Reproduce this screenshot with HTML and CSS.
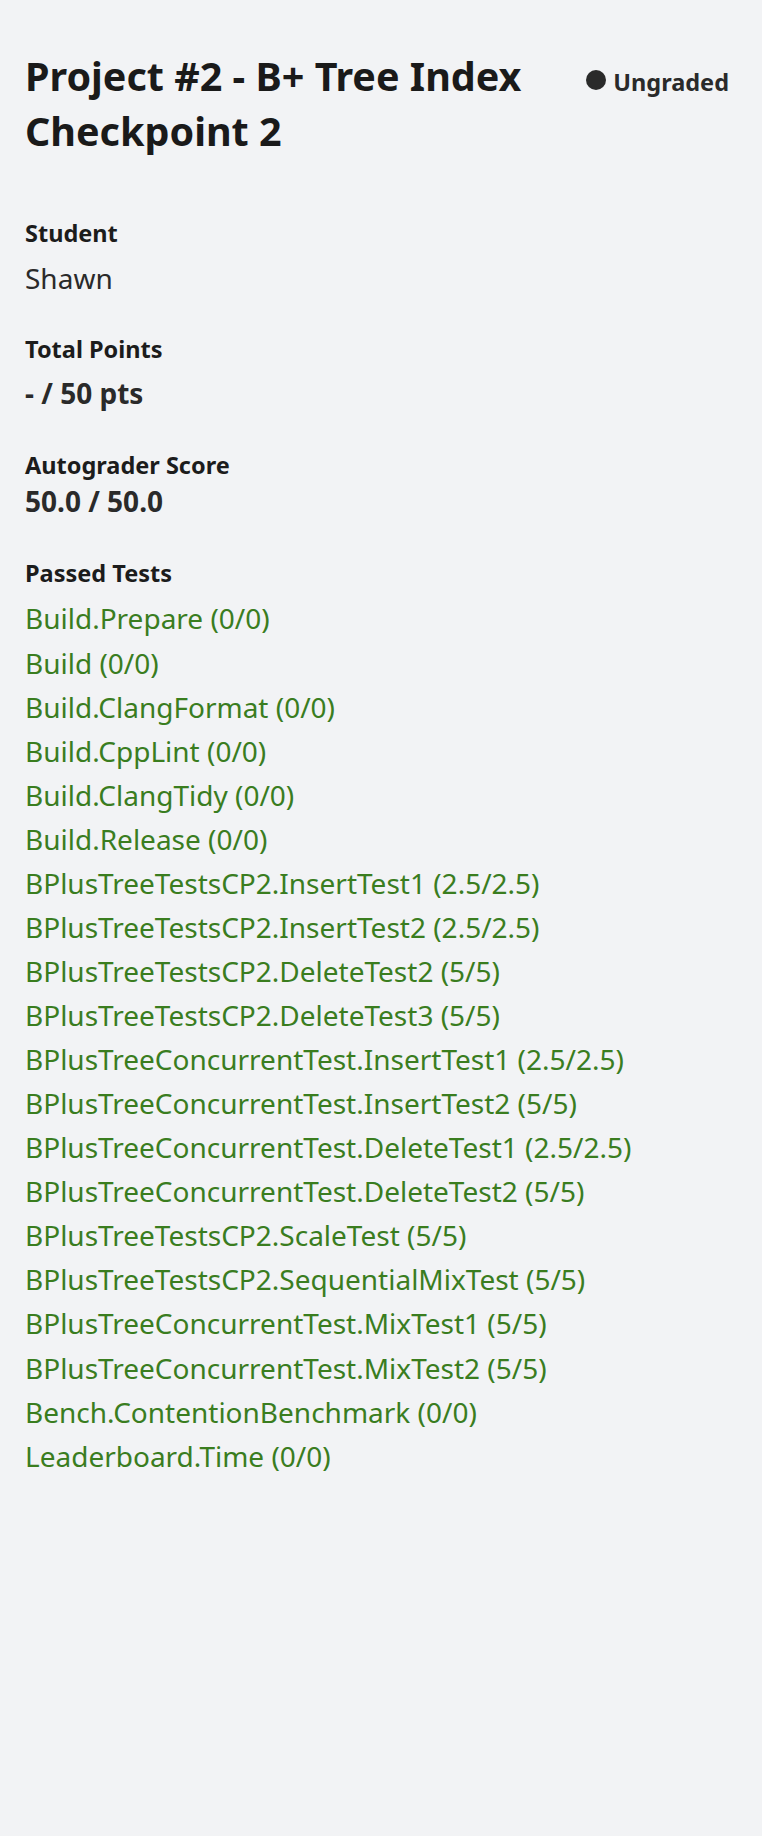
FILE: index.html
```html
<!DOCTYPE html>
<html lang="en">
<head>
<meta charset="utf-8">
<title>Project #2 - B+ Tree Index Checkpoint 2</title>
<link rel="stylesheet" href="styles.css">
</head>
<body>
<main class="page">
  <header class="header">
    <h1 class="title">Project #2 - B+ Tree Index Checkpoint 2</h1>
    <div class="status"><span class="status-dot"></span><span class="status-text">Ungraded</span></div>
  </header>
  <section class="fields">
    <div class="field field-student">
      <div class="label">Student</div>
      <div class="value value-name">Shawn</div>
    </div>
    <div class="field field-points">
      <div class="label">Total Points</div>
      <div class="value value-points">- / 50 pts</div>
    </div>
    <div class="field field-score">
      <div class="label">Autograder Score</div>
      <div class="value value-score">50.0 / 50.0</div>
    </div>
    <div class="field field-tests">
      <div class="label">Passed Tests</div>
      <ul class="tests">
        <li>Build.Prepare (0/0)</li>
        <li>Build (0/0)</li>
        <li>Build.ClangFormat (0/0)</li>
        <li>Build.CppLint (0/0)</li>
        <li>Build.ClangTidy (0/0)</li>
        <li>Build.Release (0/0)</li>
        <li>BPlusTreeTestsCP2.InsertTest1 (2.5/2.5)</li>
        <li>BPlusTreeTestsCP2.InsertTest2 (2.5/2.5)</li>
        <li>BPlusTreeTestsCP2.DeleteTest2 (5/5)</li>
        <li>BPlusTreeTestsCP2.DeleteTest3 (5/5)</li>
        <li>BPlusTreeConcurrentTest.InsertTest1 (2.5/2.5)</li>
        <li>BPlusTreeConcurrentTest.InsertTest2 (5/5)</li>
        <li>BPlusTreeConcurrentTest.DeleteTest1 (2.5/2.5)</li>
        <li>BPlusTreeConcurrentTest.DeleteTest2 (5/5)</li>
        <li>BPlusTreeTestsCP2.ScaleTest (5/5)</li>
        <li>BPlusTreeTestsCP2.SequentialMixTest (5/5)</li>
        <li>BPlusTreeConcurrentTest.MixTest1 (5/5)</li>
        <li>BPlusTreeConcurrentTest.MixTest2 (5/5)</li>
        <li>Bench.ContentionBenchmark (0/0)</li>
        <li>Leaderboard.Time (0/0)</li>
      </ul>
    </div>
  </section>
</main>
</body>
</html>
```
FILE: styles.css
```css
html, body {
  margin: 0;
  padding: 0;
  background: #f2f3f5;
}
body {
  font-family: "Noto Sans", "Open Sans", sans-serif;
  color: #1f1f1f;
  min-height: 1836px;
}
.page {
  padding: 49px 33px 40px 25px;
}
.header {
  display: flex;
  justify-content: space-between;
  align-items: baseline;
  gap: 24px;
}
.title {
  margin: 0;
  font-size: 39.5px;
  line-height: 55px;
  font-weight: 700;
  color: #1a1a1a;
  max-width: 520px;
}
.status {
  flex-shrink: 0;
  font-size: 23.5px;
  line-height: 30px;
  font-weight: 700;
  color: #2a2a2a;
  white-space: nowrap;
}
.status-dot {
  display: inline-block;
  width: 20px;
  height: 20px;
  border-radius: 50%;
  background: #2a2a2a;
  margin-right: 7px;
  vertical-align: 1px;
}
.fields {
  margin-top: 59px;
  display: flex;
  flex-direction: column;
}
.field-points {
  margin-top: 38px;
}
.field-score {
  margin-top: 39.2px;
}
.field-tests {
  margin-top: 39.3px;
}
.label {
  font-size: 23.5px;
  line-height: 30px;
  font-weight: 700;
  color: #1c1c1c;
}
.value {
  margin-top: 11.5px;
  color: #2a2a2a;
}
.value-name {
  font-size: 28px;
  line-height: 36px;
  font-weight: 400;
}
.value-points {
  margin-top: 12.5px;
  font-size: 28px;
  line-height: 35px;
  font-weight: 700;
}
.value-score {
  margin-top: 3px;
  font-size: 28px;
  line-height: 36px;
  font-weight: 700;
}
.tests {
  list-style: none;
  margin: 8px 0 0;
  padding: 0;
}
.tests li {
  font-size: 28px;
  line-height: 44.06px;
  color: #3a7d1f;
}
```
